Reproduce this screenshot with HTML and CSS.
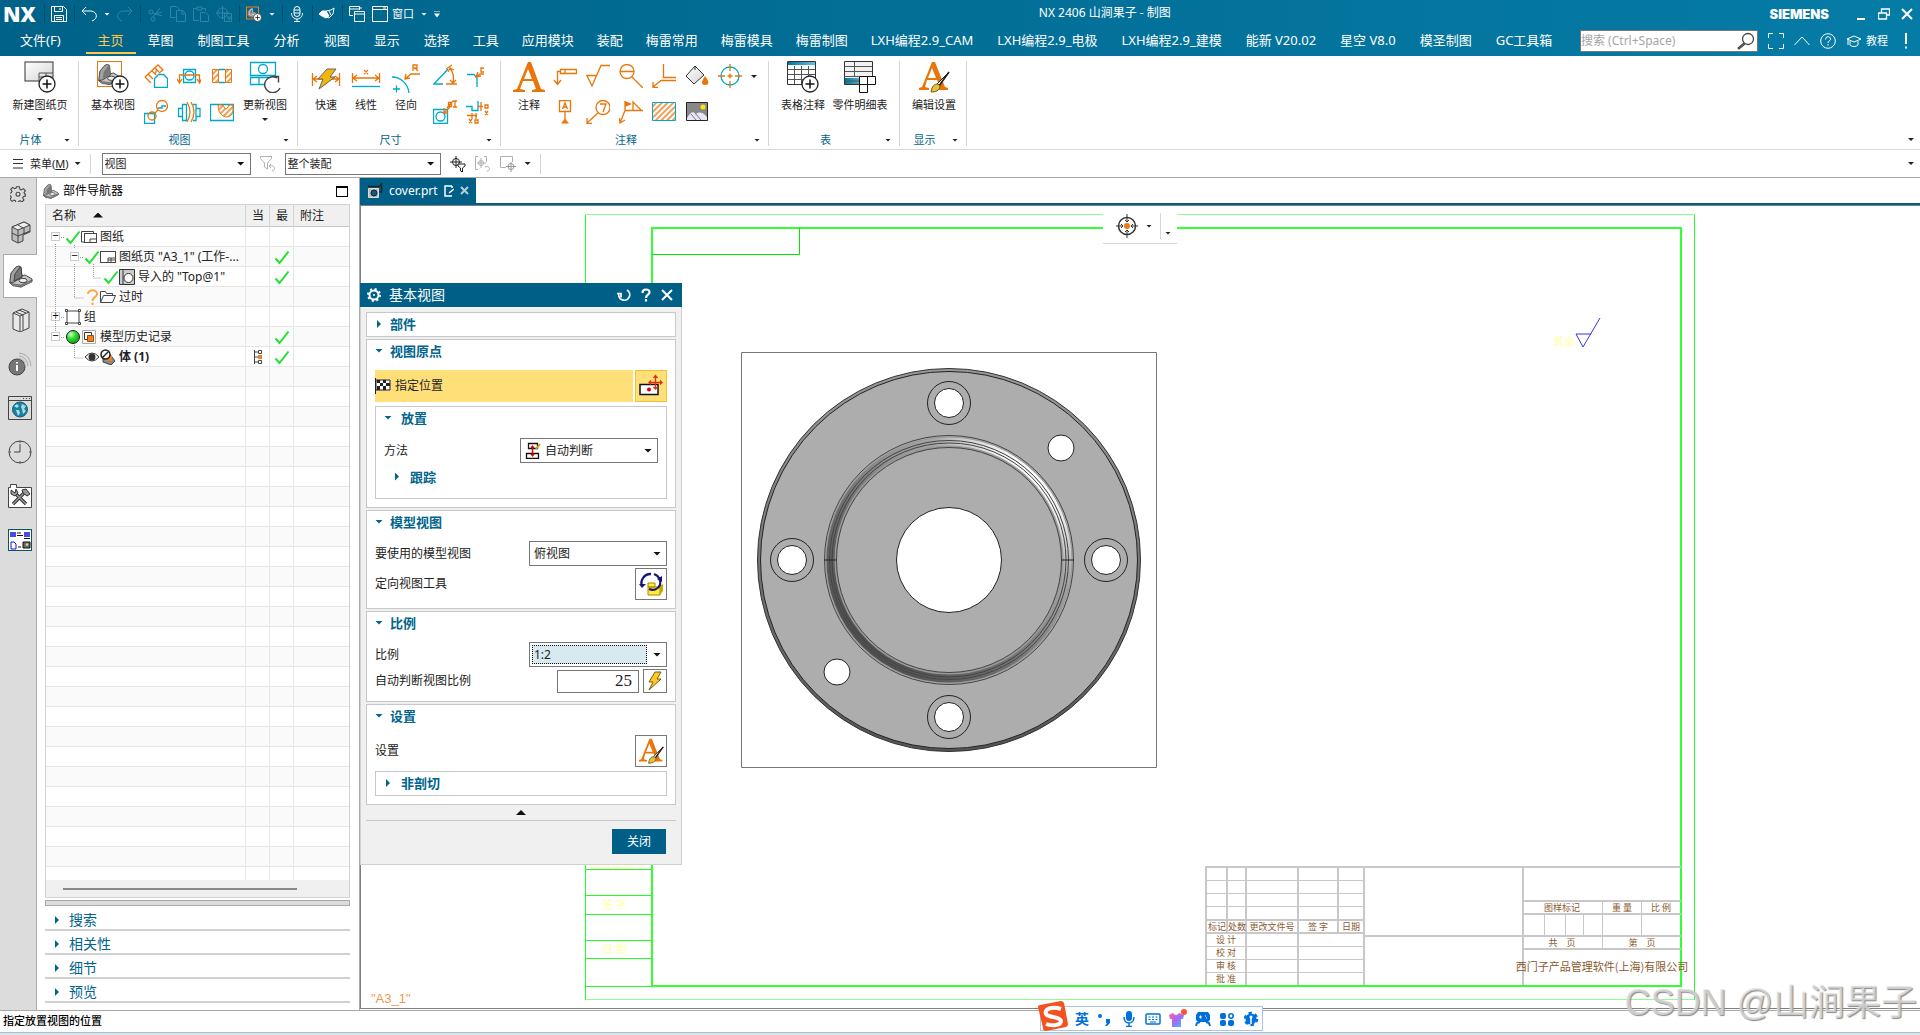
FILE: index.html
```html
<!DOCTYPE html>
<html lang="zh-CN">
<head>
<meta charset="utf-8">
<title>NX 2406 山涧果子 - 制图</title>
<link rel="stylesheet" href="styles.css">
</head>
<body>
<svg class="sprite" aria-hidden="true">
  <defs>
    <linearGradient id="metal" x1="0" y1="0" x2="1" y2="1"><stop offset="0" stop-color="#d8d8d8"/><stop offset="1" stop-color="#6e6e6e"/></linearGradient>
    <linearGradient id="paper" x1="0" y1="0" x2="1" y2="1"><stop offset="0" stop-color="#fff"/><stop offset="1" stop-color="#d4d4d4"/></linearGradient>
    <linearGradient id="sheet-blue" x1="0" y1="0" x2="1" y2="0"><stop offset="0" stop-color="#00769f"/><stop offset="1" stop-color="#6fc0d8"/></linearGradient>
    <radialGradient id="ball" cx=".35" cy=".3" r=".7"><stop offset="0" stop-color="#d8ffd8"/><stop offset=".45" stop-color="#35e035"/><stop offset="1" stop-color="#14a414"/></radialGradient>
    <pattern id="hatch" width="4" height="4" patternUnits="userSpaceOnUse" patternTransform="rotate(45)"><path d="M1 0V4" stroke="#e8760a" stroke-width="1.4"/></pattern>
  </defs>
  <symbol id="check" viewBox="0 0 16 16"><path d="M1.500 9.500L5.500 14L14.500 2.500" fill="none" stroke="#22e02e" stroke-width="2"/></symbol>
  <symbol id="bracket" viewBox="0 0 24 24"><path d="M1 18l11-6 4-1 7 4v2l-11 6-8-2-3-2z" fill="#c4c4c4" stroke="#444"/><path d="M1 18l3 2 8 1 11-5v2l-11 5-8-1-3-3z" fill="#8a8a8a" stroke="#444" stroke-width=".6"/><path d="M1 16l1-7 5-6q3-2 5 0l1 10-8 5-4 1z" fill="#a2a2a2" stroke="#444"/><path d="M5 17l1-7 5-7 1 1 1 9z" fill="#787878"/><ellipse cx="14" cy="16.500" rx="4" ry="2.200" fill="#eee" stroke="#444"/></symbol>
  <symbol id="plusbadge" viewBox="0 0 18 18"><circle cx="9" cy="9" r="8" fill="#fff" stroke="#222" stroke-width="1.300"/><path d="M9 4.500v9M4.500 9h9" stroke="#111" stroke-width="1.500"/></symbol>
  <symbol id="letterbrush" viewBox="0 0 32 32"><path d="M1 29v-2l3-1L14 1h3l10 25 3 1v2H19v-2l3-1-3-7H9l-2 7 4 1v2zM10 17h8L14 7z" fill="#e8760a"/><path d="M31 11L18 24l2 2z" fill="#fff" stroke="#222"/><path d="M31 11L21 25" stroke="#222" stroke-width="1.600"/><path d="M20 23c-4 0-6 2-7 8 4 0 9-1 9-6z" fill="#e5c040" stroke="#6f5a10"/></symbol>
  <symbol id="bolt" viewBox="0 0 16 20"><path d="M8 1h6l-4 7h4L2 19l4-8H2z" fill="#ffc926" stroke="#7b5a08"/></symbol>
  <symbol id="sheet" viewBox="0 0 16 16"><rect x=".5" y="2.500" width="15" height="11" fill="#fff" stroke="#444"/><path d="M8 13v-4h7M8 11h7M11 9v4" fill="none" stroke="#444"/></symbol>
</svg>

<header class="app-header">
  <div class="title-row">
    <div class="quick-tools">
      <strong class="nx-logo">NX</strong>
      <i class="tool-sep"></i>
      <button class="tool" aria-label="保存"><svg viewBox="0 0 16 16"><path d="M.5.5h12l3 3v12H.5zM3.500.500v5h8v-5M9 2v2M3.500 15.500v-6h9v6M5 11.500h6M5 13.500h6"/></svg></button>
      <i class="tool-sep"></i>
      <button class="tool" aria-label="撤销"><svg viewBox="0 0 16 16"><path d="M5 1L1 5l4 4M1 5h9c7 1 7 8 1 10"/></svg></button>
      <i class="caret light"></i>
      <button class="tool dim" aria-label="重做"><svg viewBox="0 0 16 16"><path d="M11 1l4 4-4 4M15 5H6c-7 1-7 8-1 10"/></svg></button>
      <i class="tool-sep"></i>
      <button class="tool dim" aria-label="剪切"><svg viewBox="0 0 16 16"><circle cx="4" cy="6" r="2"/><circle cx="6" cy="13" r="2"/><path d="M6 7l9 3M6 11L13 2M8 8l7-2"/></svg></button>
      <button class="tool dim" aria-label="复制"><svg viewBox="0 0 16 16"><path d="M5.500 11.500h-5V.500h6l3 3v1M6.500 4.500h6l3 3v8h-9zM12 5v3h3"/></svg></button>
      <button class="tool dim" aria-label="粘贴"><svg viewBox="0 0 16 16"><path d="M6 14.500H.5v-12H4M9 2.500h3.500V5M4 1h5v3H4zM7.500 6.500h5l3 3v6h-8z"/></svg></button>
      <button class="tool dim" aria-label="命令查找"><svg viewBox="0 0 16 16"><circle cx="6.500" cy="7" r="5"/><path d="M0 7h13M6.500 0v13M8.500 7.500h7v8h-7zM10 9l4 4M14 10v3h-3"/></svg></button>
      <i class="tool-sep"></i>
      <button class="tool" aria-label="基本视图"><svg viewBox="0 0 16 16"><rect x=".5" y="1" width="12" height="12" style="stroke:#f08020"/><use href="#bracket" x="1" y="1" width="11" height="11"/><use href="#plusbadge" x="7" y="7" width="9" height="9"/></svg></button>
      <i class="caret light"></i>
      <i class="tool-sep"></i>
      <button class="tool" aria-label="语音"><svg viewBox="0 0 16 16"><rect x="5" y=".5" width="6" height="10" rx="3"/><path d="M5 4h6M5 7h6M2.500 7c0 8 11 8 11 0M8 13v3M5 15.500h6"/></svg></button>
      <i class="tool-sep"></i>
      <button class="tool" aria-label="触控"><svg viewBox="0 0 16 16"><path d="M0 8l3-3h4l3 5-3 2-4-2z" fill="#fff"/><path d="M7 5l5-1 3-2-1 6-4 4-3-1M10 5l2 4"/></svg></button>
      <i class="tool-sep"></i>
      <button class="tool" aria-label="层叠"><svg viewBox="0 0 16 16"><path d="M4 9.500H.5v-9h10V4M.5 3h10M5.500 5.500h10v10h-10zM5.500 8h10M11 2h2"/></svg></button>
      <button class="tool wide"><svg viewBox="0 0 16 16"><path d="M.5.500h15v15H.5zM.5 3.500h15M11 2h3"/></svg>窗口</button>
      <i class="caret light"></i>
      <i class="caret light barred"></i>
    </div>
    <div class="window-title">NX 2406 山涧果子 - 制图</div>
    <div class="window-controls">
      <strong class="brand">SIEMENS</strong>
      <button aria-label="最小化"><svg width="12" height="12" viewBox="0 0 12 12"><path d="M2 11h8" stroke="#fff" stroke-width="2"/></svg></button>
      <button aria-label="还原"><svg width="12" height="12" viewBox="0 0 12 12"><path d="M3.500 5V1h8v6H9M.5 5h8v6h-8z" fill="none" stroke="#fff" stroke-width="1.300"/></svg></button>
      <button aria-label="关闭窗口"><svg width="12" height="12" viewBox="0 0 12 12"><path d="M1 1l10 10M11 1L1 11" stroke="#fff" stroke-width="2"/></svg></button>
    </div>
  </div>
  <div class="tab-row">
    <nav class="tabs">
      <a href="#" class="file-tab">文件(F)</a><a href="#" class="active">主页</a><a href="#">草图</a><a href="#">制图工具</a><a href="#">分析</a><a href="#">视图</a><a href="#">显示</a><a href="#">选择</a><a href="#">工具</a><a href="#">应用模块</a><a href="#">装配</a><a href="#">梅雷常用</a><a href="#">梅雷模具</a><a href="#">梅雷制图</a><a href="#">LXH编程2.9_CAM</a><a href="#">LXH编程2.9_电极</a><a href="#">LXH编程2.9_建模</a><a href="#">能新 V20.02</a><a href="#">星空 V8.0</a><a href="#">模圣制图</a><a href="#">GC工具箱</a>
    </nav>
    <div class="header-tools">
      <label class="search-box"><input type="text" placeholder="搜索 (Ctrl+Space)" aria-label="搜索"><svg width="18" height="18" viewBox="0 0 18 18"><circle cx="11" cy="7" r="5.500" fill="none" stroke="#444" stroke-width="1.300"/><path d="M7 11l-6 5 1 1 6-5" fill="none" stroke="#444" stroke-width="1.200"/></svg></label>
      <button class="tool" aria-label="全屏"><svg viewBox="0 0 16 16"><path d="M5 .5H.5V5M11 .5h4.500V5M5 15.500H.5V11M11 15.500h4.500V11"/></svg></button>
      <button class="tool" aria-label="最小化功能区"><svg viewBox="0 0 16 16"><path d="M.5 12L8 4l7.500 8"/></svg></button>
      <button class="tool" aria-label="帮助"><svg viewBox="0 0 16 16"><circle cx="8" cy="8" r="7.300"/><path d="M5.500 6.500c0-4 5.500-3.500 5 0-.5 1.500-2.500 1.500-2.500 3.500M8 11v1.500"/></svg></button>
      <button class="tool wide"><svg viewBox="0 0 16 16"><path d="M1 6l7-3 7 3-7 3zM4 8v4c2 2 6 2 8 0V8M2 7v5"/></svg>教程</button>
      <button class="tool" aria-label="提示"><svg viewBox="0 0 16 16"><path d="M8 0v11M8 13.500v2" stroke-width="2"/></svg></button>
    </div>
  </div>
</header>

<section class="ribbon" aria-label="主页">
  <div class="group g-sheet">
    <div class="group-body">
      <button class="big"><svg viewBox="0 0 32 32"><rect x="1" y="1" width="28" height="19" fill="url(#paper)" stroke="#333"/><path d="M15 20v-8h14M15 16h14M22 12v8" fill="none" stroke="#555"/><use href="#plusbadge" x="14" y="14" width="18" height="18"/></svg>新建图纸页<i class="caret"></i></button>
    </div>
    <div class="group-label"><span>片体</span><i class="caret"></i></div>
  </div>
  <div class="group g-view">
    <div class="group-body">
      <button class="big"><svg viewBox="0 0 32 32"><rect x=".5" y=".5" width="24" height="25" fill="none" stroke="#e8760a"/><use href="#bracket" x="1" y="1" width="23" height="24"/><use href="#plusbadge" x="14" y="14" width="18" height="18"/></svg>基本视图</button>
      <div class="small-grid c3">
        <button aria-label="投影视图"><svg viewBox="0 0 24 24"><path class="o" d="M1 13L14 1l5 5-4 3M1 13l6 6M4 10l5 5M8 7l4 4M11 4l4 4M11 10l2-5"/><path class="b" d="M10.500 23.500v-9l4-4h5l4 4v9z"/></svg></button>
        <button aria-label="剖视图"><svg viewBox="0 0 24 24"><path class="b" d="M6.500 5.500h12v13h-12z"/><circle class="b" cx="12.500" cy="11.500" r="4.500"/><path class="o" d="M2.500 18v-7h20v7M0 15l2.500 4L5 15M20 15l2.500 4 2-4"/></svg></button>
        <button aria-label="剖切线"><svg viewBox="0 0 24 24"><path d="M2.500 5.500h6v13h-6zM15.500 5.500h6v13h-6z" fill="url(#hatch)" stroke="#e8760a"/><path class="b" d="M9 5.500h6M9 18.500h6"/></svg></button>
        <button aria-label="局部放大图"><svg viewBox="0 0 24 24"><path class="b" d="M.5 13.500h10v10H.5z"/><circle class="o" cx="18" cy="6" r="5.500"/><circle class="o" cx="8" cy="16" r="4"/><path class="o" d="M11 13l3-3"/><path class="b" d="M14 8h4V6h4"/></svg></button>
        <button aria-label="断开视图"><svg viewBox="0 0 24 24"><path class="b" d="M1.500 8.500h4v8h-4zM5.500 4.500h4v16h-4zM16 4.500h3v16h-3M19 8.500h4v8h-4"/><path class="o" d="M10 2q6 10 0 20M14 2q6 10 0 20"/></svg></button>
        <button aria-label="局部剖"><svg viewBox="0 0 24 24"><path class="b" d="M.5 4.500h23v16H.5z"/><path d="M8 5c0 15 15 15 15 5V5h-4q-3 8-6 0z" fill="#fff"/><path d="M8 5c0 15 15 15 15 5V5h-4q-3 8-6 0z" fill="url(#hatch)" stroke="#e8760a"/></svg></button>
      </div>
      <button class="big"><svg viewBox="0 0 32 32"><path class="b" d="M1.500 1.500h25v13h-25zM1.500 16.500h25v7h-25zM10 17v6"/><circle class="b" cx="14" cy="8" r="4.500"/><circle cx="24" cy="24" r="8" fill="#fff"/><path d="M28 17a8 8 0 1 0 3 10M24 15.500h5.500v6" fill="none" stroke="#444" stroke-width="1.400"/></svg>更新视图<i class="caret"></i></button>
    </div>
    <div class="group-label"><span>视图</span><i class="caret"></i></div>
  </div>
  <div class="group g-dim">
    <div class="group-body">
      <button class="big narrow"><svg viewBox="0 0 32 32"><path class="o" d="M2.500 12v13M29.500 12v13M3 18h26M7 15l-4 3 4 3M25 15l4 3-4 3"/><path d="M17 8h9l-6 8h5L9 28l4-10H8z" fill="#f2b60c" stroke="#666"/></svg>快速</button>
      <button class="big narrow"><svg viewBox="0 0 32 32"><path class="o" d="M2.500 12v10M29.500 12v10M3 17h26M7 14l-4 3 4 3M25 14l4 3-4 3M14 9l4 4M18 9l-4 4"/><path class="b" d="M2 25.500h28" stroke-width="2"/></svg>线性</button>
      <button class="big narrow"><svg viewBox="0 0 32 32"><path class="b" d="M2 16c9 0 16 7 17 16M3 28h7M6.500 24.500v7"/><path class="o" d="M30 13h-9l-6 5M16 13l-1 5 5-1M23 10V4h4v3h-4M25 7l3 3"/></svg>径向</button>
      <div class="small-grid c2">
        <button aria-label="角度"><svg viewBox="0 0 24 24"><path class="b" d="M15 5L1 20h9"/><path class="o" d="M13 5l6-4M13 20h11M17 4q5 7 3 15M15 8l2-4 4 2M17 16l3 3 3-3"/></svg></button>
        <button aria-label="倒斜角"><svg viewBox="0 0 24 24"><path class="b" d="M1 10.500h7l3 3V23"/><path class="o" d="M18 10h-4l-4 3M12 8l-2 5 5-1M18 4h-3v4h3"/></svg></button>
        <button aria-label="孔标注"><svg viewBox="0 0 24 24"><path class="b" d="M.5 9.500h14v14H.5z"/><circle class="b" cx="7.500" cy="16.500" r="4.500"/><path class="o" d="M17 7l-6 6M11 8v5h4M22 1v6M20 1h4M20 7h4M15.500 2.500h3v4h-3zM14 8l6-7"/></svg></button>
        <button aria-label="坐标"><svg viewBox="0 0 24 24"><path class="b" d="M0 6.500h6v4h6V1"/><path class="o" d="M12 6.500h5M15 2v9M19 5h3v3h-3zM19 11l3 4M22 11l-3 4M1 15.500h10M6 13v6M10 13v6M3 19l3 4M6 19l-3 4M9 20h3v3H9z"/></svg></button>
      </div>
    </div>
    <div class="group-label"><span>尺寸</span><i class="caret"></i></div>
  </div>
  <div class="group g-note">
    <div class="group-body">
      <button class="big narrow"><svg viewBox="0 0 32 32"><path d="M0 31v-2l4-1L15 1h3l10 27 4 1v2H19v-2l4-1-3-8H10l-3 8 5 1v2zM11 18h8L15 8z" fill="#e8760a"/></svg>注释</button>
      <div class="small-grid c6">
        <button aria-label="特征控制框"><svg viewBox="0 0 24 24"><path class="o" d="M7.500 5.500h16v4h-16zM12 5v5M7 7.500H4.500V20M1 16l3.500 4.500L8 16"/></svg></button>
        <button aria-label="表面粗糙度"><svg viewBox="0 0 24 24"><path class="o" d="M24 1.500H15L6 22 1 11.500h9"/></svg></button>
        <button aria-label="目标点"><svg viewBox="0 0 24 24"><circle class="o" cx="8" cy="7.500" r="7"/><path class="o" d="M1 7.500h14M13 13l11 11"/></svg></button>
        <button aria-label="相交符号"><svg viewBox="0 0 24 24"><path class="o" d="M11.500 0v13.500H24M24 16.500H9L1 23M1 18v5.500h5"/></svg></button>
        <button aria-label="填充"><svg viewBox="0 0 24 24"><path d="M10 2l9 9-10 9-8-8z" fill="url(#paper)" stroke="#333"/><path d="M10 2v4" stroke="#333"/><path d="M20 12c5 6 4 9 0 9s-4-3 0-9z" fill="#e8760a"/></svg></button>
        <button aria-label="中心标记"><svg viewBox="0 0 24 24"><circle class="b" cx="12" cy="12" r="9"/><path class="o" d="M12 0v7M12 17v7M0 12h7M17 12h7M9.500 12h5M12 9.500v5"/></svg></button>
        <button aria-label="基准特征"><svg viewBox="0 0 24 24"><path class="o" d="M6.500.500h11v11h-11zM12 12v9M9.500 9L12 3l2.500 6M10.500 7h3"/><path d="M8 23.500l4-5 4 5z" fill="#e8760a"/></svg></button>
        <button aria-label="符号标注"><svg viewBox="0 0 24 24"><circle class="o" cx="17" cy="7.500" r="7"/><path class="o" d="M14 4h6l-3 8M12 13L1 23M1 18v5.500h5"/></svg></button>
        <button aria-label="焊接符号"><svg viewBox="0 0 24 24"><path class="o" d="M24 10.500H6L1 23M.5 18l.5 5 5-3M6 10V1M14 10V2l8 8"/><path d="M6 1l7 3-7 3z" fill="#e8760a"/></svg></button>
        <button aria-label="剖面线"><svg viewBox="0 0 24 24"><path d="M.5 2.500h23v18H.5z" fill="url(#hatch)" stroke="#00a8cc"/></svg></button>
        <button aria-label="图像"><svg viewBox="0 0 24 24"><path d="M1.500 2.500h21v18h-21z" fill="#888" stroke="#222"/><path d="M2 18q5-9 9-4 5-4 11 3v3H2z" fill="#e8e8f4"/><path d="M6 14l5 6M10 13l6 7" stroke="#778"/><circle cx="18" cy="7" r="2.500" fill="#ffe600"/></svg></button>
      </div>
      <i class="caret more"></i>
    </div>
    <div class="group-label"><span>注释</span><i class="caret"></i></div>
  </div>
  <div class="group g-table">
    <div class="group-body">
      <button class="big"><svg viewBox="0 0 32 32"><path d="M.5.500h28v23H.5z" fill="#fff" stroke="#333"/><path d="M1 1h27v3H1z" fill="url(#sheet-blue)"/><path d="M1 8.500h27M1 13.500h27M1 18.500h27M7.500 5v18M14.500 5v18M21.500 5v18" stroke="#555"/><use href="#plusbadge" x="14" y="14" width="18" height="18"/></svg>表格注释</button>
      <button class="big mid"><svg viewBox="0 0 32 32"><path d="M.5.500h28v23H.5z" fill="#f2f2f2" stroke="#333"/><path d="M1 17h20v6H1z" fill="url(#sheet-blue)"/><path d="M1 5.500h27M1 10.500h27M1 15.500h27M1 20h20M10.500 1v14" stroke="#555"/><path d="M15.500 15.500h16v8h-8v8h-8zM23.500 15v16M15 23.500h16M23.500 23.500v8" fill="#fff" stroke="#111"/></svg>零件明细表</button>
    </div>
    <div class="group-label"><span>表</span><i class="caret"></i></div>
  </div>
  <div class="group g-show">
    <div class="group-body">
      <button class="big"><svg viewBox="0 0 32 32"><use href="#letterbrush"/></svg>编辑设置</button>
    </div>
    <div class="group-label"><span>显示</span><i class="caret"></i></div>
  </div>
  <i class="caret ribbon-end"></i>
</section>

<div class="border-bar">
  <button class="menu-button"><svg width="12" height="12" viewBox="0 0 12 12"><path d="M1 1.500h10M1 5.500h10M1 10h10" stroke="#333"/></svg>菜单(<u>M</u>)<i class="caret"></i></button>
  <i class="bar-sep"></i>
  <span class="select-wrap type-filter"><select aria-label="类型过滤器"><option>视图</option></select></span>
  <svg class="bar-icon" viewBox="0 0 16 16"><path d="M.5.500h11v2L7.500 7v6l-3-2V7L.5 2.500zM10 10c5-2 6 5 2 5M11 8l-2 2 2 2" stroke="#b0b0b0"/></svg>
  <span class="select-wrap scope-filter"><select aria-label="选择范围"><option>整个装配</option></select></span>
  <svg class="bar-icon" viewBox="0 0 16 16"><circle cx="6" cy="6" r="3.500" stroke="#222"/><path d="M6 0v12M0 6h12" stroke="#222"/><path d="M8 8h7v2l-2.500 2v4l-2-1v-3L8 10z" fill="#fff" stroke="#222"/></svg>
  <svg class="bar-icon" viewBox="0 0 16 16"><path d="M3 .5H.5v13H3M9 .5h2.500V6M6 2v10M2 7h9M10 11c5-2 6 4 2 4" stroke="#b0b0b0"/><circle cx="6" cy="7" r="2.500" stroke="#b0b0b0"/></svg>
  <svg class="bar-icon" viewBox="0 0 16 16"><path d="M6 11.500H.5V.5h12V6" stroke="#b0b0b0"/><circle cx="11" cy="10.500" r="3" stroke="#999"/><path d="M11 6v10M6 10.500h10" stroke="#999"/></svg>
  <i class="caret"></i>
  <i class="bar-sep"></i>
  <i class="caret bar-end"></i>
</div>

<main class="workspace">
  <nav class="rail" aria-label="资源条">
    <button class="gear" aria-label="设置"><svg viewBox="0 0 24 24"><path d="M10 1h4l1 4 2 1 3-2 3 3-2 3 1 2 1 0v3l-3 1-1 2 2 3-3 3-3-2-2 1-1 2h-3l-1-3-2-1-3 2-3-3 2-3-1-2-2-1v-3l3-1 1-2-2-3 3-3 3 2 2-1z" stroke-width="1.600"/><circle cx="12" cy="12.500" r="3" stroke-width="1.600"/></svg></button>
    <button aria-label="装配导航器"><svg viewBox="0 0 24 24"><path d="M4 7l12-5 6 3v7l-7 3v6l-5 2-6-3z" fill="#bdbdbd"/><path d="M4 7l12-5 6 3-12 5z" fill="#eee"/><path d="M10 10v13M4 13l6 3 12-5M16 8v6M10 5l5 3"/></svg></button>
    <button class="current" aria-label="部件导航器"><svg viewBox="0 0 24 24"><use href="#bracket"/></svg></button>
    <button aria-label="重用库"><svg viewBox="0 0 24 24"><path d="M5 5l9-4 7 3v16l-9 4-7-3z" fill="#e8e8e8"/><path d="M5 5l7 3v16M12 8l9-4M8 4l7 3v15M11 2l7 3"/></svg></button>
    <button aria-label="HD3D"><svg viewBox="0 0 24 24"><circle cx="9" cy="15" r="8" fill="#777"/><path d="M9 13v6M9 10v1.500" stroke="#fff" stroke-width="2"/><path d="M11 4q8 1 9 10M11 1q11 1 12 13M11 6.500q6 1 6 7" stroke="#aaa"/></svg></button>
    <button aria-label="浏览器"><svg viewBox="0 0 24 24"><path d="M.5.500h23v23H.5zM.5 4.500h23M15 2.500h1M18 2.500h1M21 2.500h1"/><circle cx="12" cy="13.500" r="7.500" fill="#1b7f9e" stroke="#135f78"/><path d="M6 10l3-2 2 2-2 2zM8 14l3 0 1 3-2 3zM14 8l4 2-2 3 2 2-3 3-1-5-1-2z" fill="#a6dbe8" stroke="none"/></svg></button>
    <button aria-label="历史"><svg viewBox="0 0 24 24"><circle cx="12" cy="12" r="11"/><path d="M12 4v8H6M12 1v2M12 21v2M1 12h2M21 12h2"/></svg></button>
    <button aria-label="加工工具"><svg viewBox="0 0 24 24"><path d="M.5 3.500h2v-3h6v3h15v20H.5z" fill="#fff"/><path d="M5 20L17 8M7 9l11 11" stroke="#333" stroke-width="3.400"/><path d="M5 20L17 8M7 9l11 11" stroke="#999" stroke-width="1.400"/><path d="M3 6l4 3 1-4 2 4-3 3-4-2zM14 6l4-1 4 5-3 2-4-3z" fill="#999" stroke="#333"/></svg></button>
    <button aria-label="角色"><svg viewBox="0 0 24 24"><rect x=".5" y="1.500" width="23" height="21" fill="#fff" stroke="#0a5560"/><path d="M2 4h6v5H2zM16 4h6v5h-6z" fill="#4a4ae4" stroke="none"/><path d="M9 5h4M9 7.500h6M10 19h3M16 10.500h6" stroke="#111"/><path d="M3 14h3l2 2v5H3z" stroke="#1414d8"/><path d="M15 14h7v6h-7z" fill="#668" stroke="#111"/><circle cx="19" cy="16.500" r="1.200" fill="#ffe600" stroke="none"/></svg></button>
  </nav>

  <aside class="navigator">
    <div class="panel-title"><svg width="16" height="16" viewBox="0 0 24 24"><use href="#bracket"/></svg><span>部件导航器</span><button aria-label="最大化面板" class="max-button"></button></div>
    <div class="tree">
      <table>
        <colgroup><col><col class="flag"><col class="flag"><col class="remark"></colgroup>
        <thead><tr><th>名称<i class="sort-up"></i></th><th>当</th><th>最</th><th>附注</th></tr></thead>
        <tbody>
          <tr><td><div class="node d1"><b class="twist">−</b><svg class="ic chk"><use href="#check"/></svg><svg class="ic" viewBox="0 0 16 16"><path d="M3 13H.5V2.500h12V4" fill="none" stroke="#444"/><rect x="3.500" y="4.500" width="12" height="9" fill="#fff" stroke="#444"/><path d="M9 13v-3h6" stroke="#444" fill="none"/></svg>图纸</div></td><td></td><td></td><td></td></tr>
          <tr><td><div class="node d2"><b class="twist">−</b><svg class="ic chk"><use href="#check"/></svg><svg class="ic"><use href="#sheet"/></svg>图纸页 "A3_1" (工作-...</div></td><td></td><td><svg class="ic"><use href="#check"/></svg></td><td></td></tr>
          <tr><td><div class="node d3"><svg class="ic chk"><use href="#check"/></svg><svg class="ic" viewBox="0 0 16 16"><path d="M.5.500h15v15H.5zM4 .5v15" fill="#ccc" stroke="#333"/><circle cx="9.500" cy="9" r="4.500" fill="#fff" stroke="#333"/></svg>导入的 "Top@1"</div></td><td></td><td><svg class="ic"><use href="#check"/></svg></td><td></td></tr>
          <tr><td><div class="node d2b"><svg class="ic chk" viewBox="0 0 16 16"><path d="M4 5c0-5 9-5 9 0 0 3-4.500 3-4.500 7M8.500 13.500V16" fill="none" stroke="#ffa640" stroke-width="2"/></svg><svg class="ic" viewBox="0 0 16 16"><path d="M.5 13.500v-11h5l1 2h6v2M.5 13.500l3-7h12l-3 7z" fill="none" stroke="#444"/></svg>过时</div></td><td></td><td></td><td></td></tr>
          <tr><td><div class="node d1"><b class="twist">+</b><svg class="ic" viewBox="0 0 16 16"><path d="M2 2h12v12H2zM.5.500h2v2h-2zM13.500.500h2v2h-2zM.5 13.500h2v2h-2zM13.500 13.500h2v2h-2z" fill="#fff" stroke="#444"/></svg>组</div></td><td></td><td></td><td></td></tr>
          <tr><td><div class="node d1"><b class="twist">−</b><svg class="ic" viewBox="0 0 16 16"><circle cx="8" cy="8" r="6.500" fill="url(#ball)" stroke="#222"/></svg><svg class="ic" viewBox="0 0 16 16"><path d="M1.500 1.500h13v13h-13z" fill="none" stroke="#aaa"/><path d="M3.500 3.500h7v7h-7z" fill="#fff" stroke="#333"/><path d="M6.500 6.500h6v6h-6z" fill="#f08020" stroke="#a04a00"/></svg>模型历史记录</div></td><td></td><td><svg class="ic"><use href="#check"/></svg></td><td></td></tr>
          <tr><td><div class="node d2b strong"><svg class="ic" viewBox="0 0 16 16"><path d="M1 8q7-8 14 0-7 8-14 0z" fill="#fff" stroke="#333"/><circle cx="8" cy="8" r="3.500" fill="#333"/></svg><svg class="ic" viewBox="0 0 16 16"><path d="M3 8l6-4 6 8-4 4-8-3z" fill="#888" stroke="#444"/><path d="M6 7h6v5H6z" fill="#f08020"/><circle cx="5.500" cy="5.500" r="4.500" fill="#fff" stroke="#222" stroke-width="1.500"/><path d="M2.500 8.500l6-6" stroke="#222" stroke-width="1.500"/></svg>体 (1)</div></td><td><svg class="ic" viewBox="0 0 16 16"><path d="M4.500 1v14M5 3h3M5 8h3M5 13h3M8.500 1.500h3v3h-3zM8.500 11.500h3v3h-3z" fill="none" stroke="#444"/><path d="M8 6h4v4H8z" fill="#f08020"/></svg></td><td><svg class="ic"><use href="#check"/></svg></td><td></td></tr>
        </tbody>
      </table>
      <svg class="tree-lines" width="60" height="140"><path d="M11.500 17V104M17 10.500h4M17 90.500h4M17 110.500h4M30.500 18v3M30.500 37v34h9M36 30.500h4M49.500 37v14h8M30.500 118v13h9" fill="none" stroke="#999" stroke-dasharray="1 1"/></svg>
      <div class="empty-rows"><i></i><i></i><i></i><i></i></div>
      <div class="h-scroll"><i></i></div>
    </div>
    <div class="splitter"></div>
    <button class="fold">搜索</button>
    <button class="fold">相关性</button>
    <button class="fold">细节</button>
    <button class="fold">预览</button>
  </aside>

  <section class="stage">
    <div class="doc-tabs">
      <div class="doc-tab"><svg width="16" height="16" viewBox="0 0 16 16"><path d="M1.500 5.500h10v9h-10z" fill="#bbb" stroke="#ddd"/><path d="M1 3.500h11l2.500-2.500v8h-2" fill="none" stroke="#222" stroke-width="1.500"/><circle cx="7" cy="10" r="3" fill="#005f87" stroke="#222"/></svg><span>cover.prt</span><svg width="10" height="12" viewBox="0 0 10 12"><path d="M8 1H1v10h7M8 1v2M5 8l5-4" fill="none" stroke="#fff" stroke-width="1.500"/></svg><button aria-label="关闭文档"><svg width="9" height="9" viewBox="0 0 9 9"><path d="M1 1l7 7M8 1L1 8" stroke="#b7cdd8" stroke-width="2"/></svg></button></div>
    </div>
    <div class="canvas">
      <svg class="drawing" width="1559" height="802" viewBox="361 206 1559 802">
        <defs>
          <linearGradient id="ring" x1="0" y1="1" x2="1" y2="0"><stop offset="0" stop-color="#3c3c3c"/><stop offset=".45" stop-color="#777"/><stop offset=".72" stop-color="#a8a8a8"/><stop offset=".85" stop-color="#fafafa"/><stop offset="1" stop-color="#d0d0d0"/></linearGradient>
          <linearGradient id="rim" x1="0" y1="1" x2="0" y2="0"><stop offset="0" stop-color="#555"/><stop offset="1" stop-color="#999"/></linearGradient>
        </defs>
        <g fill="none" stroke="#22ff22">
          <path d="M585.500 1000V214.500M1694.500 214.500V1000"/><path d="M585.500 214.500h1109M585.500 999.500h1109" stroke="#8cff8c"/>
          <path d="M652 228H1681V986H652z" stroke="#33ff33" stroke-width="2"/>
          <path d="M652 254.500h147.500V228" stroke="#00e800"/>
          <path d="M585.500 869.500H652M585.500 895.500H652M585.500 914.500H652M585.500 940.500H652M585.500 958.500H652M585.500 986.500H652"/>
        </g>
        <g class="faint">
          <text x="590" y="868">旧底图总号</text><text x="602" y="909">签 字</text><text x="602" y="953">日 期</text><text x="1553" y="346">其余</text>
        </g>
        <path d="M1576 334h15M1576 334l7 13 17-29" fill="none" stroke="#3434e0"/>
        <path d="M741.500 352.500h415v415h-415z" fill="none" stroke="#777"/>
        <g fill="#adadad" stroke="#222">
          <circle cx="949" cy="560" r="190" stroke="url(#rim)" stroke-width="3"/>
          <circle cx="949" cy="560" r="191.500" fill="none" stroke="#333"/><circle cx="949" cy="560" r="188.500" fill="none"/>
          <circle cx="949" cy="560" r="118" fill="none" stroke="#999" stroke-width="11"/>
          <circle cx="949" cy="560" r="121" fill="none" stroke="url(#ring)" stroke-width="3"/>
          <circle cx="949" cy="560" r="117" fill="none" stroke="url(#ring)" stroke-width="5"/>
          <circle cx="949" cy="560" r="124.500" fill="none" stroke="#444"/><circle cx="949" cy="560" r="119.500" fill="none" stroke="#444"/><circle cx="949" cy="560" r="117" fill="none" stroke="#444"/><circle cx="949" cy="560" r="112.500" stroke="#444"/>
          <path d="M824.500 560h12M1061.500 560h12"/>
          <circle cx="949" cy="403" r="21.500"/><circle cx="949" cy="717" r="21.500"/><circle cx="792" cy="560" r="21.500"/><circle cx="1106" cy="560" r="21.500"/>
          <g fill="#fff"><circle cx="949" cy="560" r="52.500"/><circle cx="949" cy="403" r="14.500"/><circle cx="949" cy="717" r="14.500"/><circle cx="792" cy="560" r="14.500"/><circle cx="1106" cy="560" r="14.500"/><circle cx="1061" cy="448" r="13"/><circle cx="837" cy="672" r="13"/></g>
        </g>
        <g fill="none" stroke="#c8c8c8">
          <path d="M1206 985V867h475M1227 867v66M1246 867v118M1298 867v118M1338 867v66M1364 867v118M1523 867v118M1206 920h158M1206 933h158M1364 936h317M1523 901h158M1523 914h158M1523 949h158" stroke-width="2"/>
          <path d="M1206 880.500h158M1206 893.500h158M1206 906.500h158M1206 946.500h158M1206 959.500h158M1206 972.500h158M1544.500 914v22M1565.500 914v22M1583.500 914v22M1602.500 901v48M1641.500 901v35"/>
        </g>
        <g class="block-text">
          <text x="1217" y="930">标记</text><text x="1237" y="930">处数</text><text x="1272" y="930">更改文件号</text><text x="1318" y="930">签 字</text><text x="1351" y="930">日期</text>
          <text x="1226" y="943">设 计</text><text x="1226" y="956">校 对</text><text x="1226" y="969">审 核</text><text x="1226" y="982">批 准</text>
          <text x="1562" y="911">图样标记</text><text x="1622" y="911">重 量</text><text x="1661" y="911">比 例</text>
          <text x="1562" y="946">共　页</text><text x="1642" y="946">第　页</text>
          <text x="1602" y="971" class="company">西门子产品管理软件(上海)有限公司</text>
        </g>
        <text x="371" y="1003" class="sheet-name">"A3_1"</text>
      </svg>
      <div class="float-bar"><svg width="22" height="24" viewBox="0 0 22 24"><circle cx="11" cy="12" r="8.500" fill="none" stroke="#333" stroke-width="1.500"/><path d="M11 0v8M11 16v8M0 12h7M15 12h7M9 6l2 2 2-2M9 18l2-2 2 2M5 10l2 2-2 2M17 10l-2 2 2 2" fill="none" stroke="#333"/><circle cx="11" cy="12" r="3" fill="#f07810"/></svg><i class="caret"></i><i class="float-sep"></i><i class="caret low"></i></div>
    </div>

    <form class="dialog" aria-label="基本视图">
      <div class="dialog-title"><svg width="14" height="14" viewBox="0 0 14 14"><circle cx="7" cy="7" r="4.500" fill="none" stroke="#fff" stroke-width="2"/><circle cx="7" cy="7" r="6" fill="none" stroke="#fff" stroke-width="2" stroke-dasharray="2 2.710"/><circle cx="7" cy="7" r="1" fill="#fff"/></svg><span>基本视图</span>
        <button type="button" aria-label="重置"><svg width="14" height="14" viewBox="0 0 14 14"><path d="M10 2a5.500 5.500 0 1 1-8 3M0 5.500h4v4" fill="none" stroke="#fff" stroke-width="1.700"/></svg></button>
        <button type="button" aria-label="帮助"><svg width="10" height="14" viewBox="0 0 10 14"><path d="M1.500 5c0-5 7-4 7-1 0 3-3.500 2.500-3.500 6M5 11v2.500" fill="none" stroke="#fff" stroke-width="2.200"/></svg></button>
        <button type="button" aria-label="关闭对话框"><svg width="12" height="12" viewBox="0 0 12 12"><path d="M1 1l10 10M11 1L1 11" stroke="#fff" stroke-width="2"/></svg></button>
      </div>
      <div class="dialog-body">
        <fieldset class="box closed"><h3 class="shut">部件</h3></fieldset>
        <fieldset class="box">
          <h3>视图原点</h3>
          <div class="pick"><span class="pick-label"><svg width="16" height="16" viewBox="0 0 16 16"><path d="M.5 0v16" stroke="#222"/><path d="M1 2h14v10H1z" fill="#fff" stroke="#222"/><path d="M2 2h3v3H2zM8 2h3v3H8zM5 5h3v3H5zM11 5h4v3h-4zM2 8h3v4H2zM8 8h3v4H8z" fill="#222"/></svg>指定位置</span><button type="button" class="square hot" aria-label="点对话框"><svg width="24" height="24" viewBox="0 0 24 24"><path d="M1 10.500h18v10H1z" fill="#fff" stroke="#111" stroke-width="1.500"/><circle cx="10" cy="15.500" r="2" fill="#d00"/><path d="M16.500 2v13M10 8.500h13M14.500 4l2-2.500 2 2.500M14.500 13l2 2 2-2M12 6.500l-2 2 2 2M21 6.500l2 2-2 2" fill="none" stroke="#e03010" stroke-width="1.300"/></svg></button></div>
          <div class="box inner">
            <h3>放置</h3>
            <div class="field"><label for="method">方法</label><span class="select-wrap with-icon"><svg width="16" height="17" viewBox="0 0 16 17"><path d="M3.500 1.500h9v5h-9zM1.500 11.500h12v5h-12z" fill="#fff" stroke="#111" stroke-width="1.300"/><path d="M7.500 4v10" stroke="#d00" stroke-width="1.500"/><path d="M5.500 6l2-3 2 3M5.500 12l2 3 2-3" fill="#d00"/><path d="M15 2l-4 5" stroke="#caa800" stroke-width="2"/></svg><select id="method"><option>自动判断</option></select></span></div>
            <h3 class="shut indent">跟踪</h3>
          </div>
        </fieldset>
        <fieldset class="box">
          <h3>模型视图</h3>
          <div class="field"><label for="mview">要使用的模型视图</label><span class="select-wrap"><select id="mview"><option>俯视图</option></select></span></div>
          <div class="field tall"><label for="orient">定向视图工具</label><button type="button" class="square" id="orient"><svg width="24" height="24" viewBox="0 0 24 24"><path d="M9 15h12v8H9zM9 11h7v4H9z" fill="#ffe93a" stroke="#a88a00"/><path d="M21 14l3-2v7l-3 4z" fill="#c8a800"/><path d="M3 14A9 9 0 0 1 12 2M15 2a9 9 0 0 1 6 11c-2 4-6 6-11 4" fill="none" stroke="#16167a" stroke-width="2.300"/><path d="M0 12l3 4 4-4zM18 7l5-3v6z" fill="#16167a"/></svg></button></div>
        </fieldset>
        <fieldset class="box">
          <h3>比例</h3>
          <div class="field"><label for="scale">比例</label><span class="select-wrap combo"><input id="scale" type="text" value="1:2"></span></div>
          <div class="field short"><label for="auto">自动判断视图比例</label><input id="auto" class="number" type="text" value="25"><button type="button" class="square little" aria-label="自动判断"><svg width="16" height="20" viewBox="0 0 16 20"><use href="#bolt"/></svg></button></div>
        </fieldset>
        <fieldset class="box">
          <h3>设置</h3>
          <div class="field tall set"><label for="set">设置</label><button type="button" class="square" id="set"><svg width="26" height="26" viewBox="0 0 32 32"><use href="#letterbrush"/></svg></button></div>
          <div class="box inner closed"><h3 class="shut">非剖切</h3></div>
        </fieldset>
        <i class="collapse"></i>
        <div class="dialog-actions"><button type="button" class="primary">关闭</button></div>
      </div>
    </form>
  </section>
</main>

<footer class="status">指定放置视图的位置</footer>
<div class="desktop-edge"></div>

<div class="ime" role="toolbar" aria-label="输入法">
  <svg class="ime-logo" width="32" height="32" viewBox="0 0 32 32"><path d="M1 6q0-2 2-2L24 0q2 0 3 2l4 21q0 2-2 3L9 30q-3 0-3-3z" fill="#f4511e"/><path d="M24 8C15 5 7 8 9 13c2 4 14 2 15 7 0 5-10 5-15 3" fill="none" stroke="#fff" stroke-width="4"/></svg>
  <b>英</b>
  <svg width="16" height="16" viewBox="0 0 16 16"><circle cx="3" cy="5" r="2"/><path d="M9 8h4v4l-3 3H8l2-3H9z"/></svg>
  <svg width="16" height="16" viewBox="0 0 16 16"><rect x="5" y="0" width="6" height="10" rx="3"/><path d="M3 6c0 8 10 8 10 0M8 12v4M5 15.500h6" fill="none" stroke="#0070dc" stroke-width="1.500"/></svg>
  <svg width="16" height="16" viewBox="0 0 16 16"><rect x="1" y="3" width="14" height="10" rx="1" fill="none" stroke="#0070dc" stroke-width="1.500"/><path d="M3.500 6h2M7 6h2M10.500 6h2M3.500 8.500h2M7 8.500h2M10.500 8.500h2M5 11h6" stroke="#0070dc"/></svg>
  <svg width="18" height="20" viewBox="0 0 18 20"><defs><linearGradient id="shirt" x1="0" y1="0" x2="1" y2="1"><stop offset="0" stop-color="#ff5f9e"/><stop offset=".5" stop-color="#a06cf8"/><stop offset="1" stop-color="#3ac8f8"/></linearGradient></defs><path d="M0 6l4-2q3 4 6 0l5 2-1 4h-2v8H3v-8H1z" fill="url(#shirt)"/><circle cx="15" cy="3" r="3" fill="#ff5030"/></svg>
  <svg width="16" height="16" viewBox="0 0 16 16"><path d="M3 1h10l2 3v5l-2 2H3L1 9V4z"/><path d="M4 6h3M5.500 4.500v3M10 5h1M12 7h-1" stroke="#fff"/><path d="M1 15l1-3 3-1M15 15l-1-3-3-1" fill="none" stroke="#0070dc" stroke-width="2"/></svg>
  <svg width="16" height="16" viewBox="0 0 16 16"><rect x="1" y="2" width="6" height="6" rx="2"/><circle cx="12" cy="5" r="2.200" fill="none" stroke="#0070dc" stroke-width="1.600"/><rect x="1" y="9" width="6" height="6" rx="2"/><rect x="9" y="9" width="6" height="6" rx="2"/></svg>
  <svg width="16" height="16" viewBox="0 0 16 16"><circle cx="8" cy="8" r="5.500"/><circle cx="8" cy="8" r="6" fill="none" stroke="#0070dc" stroke-width="2.500" stroke-dasharray="3.280 3"/><path d="M8 6v7" stroke="#fff" stroke-width="1.500"/><circle cx="8" cy="6" r="1.500" fill="#fff"/></svg>
</div>
<div class="watermark">CSDN @山涧果子</div>
</body>
</html>
```
FILE: styles.css
```css
* { box-sizing: border-box; }
body {
  margin: 0;
  min-height: 100vh;
  display: flex;
  flex-direction: column;
  position: relative;
  overflow-x: hidden;
  font-family: "Noto Sans", "Noto Sans CJK SC", sans-serif;
  font-size: 12px;
  line-height: 16px;
  color: #222;
  background: #fff;
}
button, input, select { font: inherit; color: inherit; }
button { margin: 0; padding: 0; border: 0; background: none; }
a { color: inherit; text-decoration: none; }
i, b { font-style: normal; }
.sprite { position: absolute; width: 0; height: 0; }

.caret {
  flex: none;
  width: 6px;
  height: 3px;
  background: #222;
  clip-path: polygon(0 0, 100% 0, 50% 100%);
}
.caret.light { background: #fff; }
.caret.barred {
  height: 7px;
  clip-path: polygon(0 0, 100% 0, 100% 1px, 0 1px, 0 3px, 100% 3px, 50% 100%, 0 3px);
}

/* header */
.app-header {
  height: 56px;
  color: #fff;
  background: linear-gradient(90deg, #006288, #057ca6);
}
.title-row, .tab-row { display: flex; height: 28px; align-items: center; }
.quick-tools { display: flex; align-items: center; gap: 7px; width: 440px; padding-left: 3px; }
.nx-logo { width: 34px; font: 800 21px/28px "Open Sans", sans-serif; }
.tool-sep { width: 1px; height: 18px; margin-right: -1px; background: #004d6b; }
.tool { display: flex; align-items: center; gap: 4px; flex: none; width: 16px; height: 18px; font-size: 11px; }
.tool.wide { width: auto; white-space: nowrap; }
.tool svg { width: 16px; height: 16px; fill: none; stroke: #fff; }
.tool.dim svg { stroke: #2f87a8; }
.window-title { flex: 1; padding-bottom: 3px; text-align: center; }
.window-controls { display: flex; align-items: center; gap: 11px; padding-right: 7px; }
.window-controls button { display: flex; }
.brand { margin-right: 15px; font: 900 13px/16px "Inter", sans-serif; }
.tab-row { justify-content: space-between; align-items: stretch; }
.tabs { display: flex; font-size: 13px; line-height: 25px; white-space: nowrap; }
.tabs a { padding: 0 12px; height: 26px; }
.tabs a:nth-child(n+8):nth-child(-n+14) { padding-right: 11px; }
.tabs .file-tab { margin: 0 13px 0 8px; }
.tabs .active { color: #ffc84a; border-bottom: 2px solid #ffc84a; }
.header-tools { display: flex; align-items: center; gap: 10px; padding: 0 6px 2px 0; }
.search-box { display: flex; align-items: center; width: 178px; height: 22px; padding-right: 2px; border: 1px solid #777; background: #fff; }
.search-box input { flex: 1; min-width: 0; padding: 0; border: 0; outline: 0; font-size: 12px; color: #222; }
.search-box input::placeholder { color: #a6a6a6; }

/* ribbon */
.ribbon { display: flex; height: 94px; padding: 5px 0 3px; position: relative; border-bottom: 1px solid #d6d6d6; }
.group { display: flex; flex-direction: column; justify-content: space-between; border-right: 1px solid #d6d6d6; }
.group-body { display: flex; padding-left: 10px; }
.g-sheet { width: 79px; }
.g-view { width: 219px; }
.g-dim { width: 203px; }
.g-note { width: 268px; }
.g-table { width: 131px; }
.g-show { width: 67px; }
.g-dim .group-body, .g-note .group-body { padding-left: 8px; }
.big { display: flex; flex-direction: column; align-items: center; gap: 4px; width: 60px; font-size: 11px; line-height: 16px; white-space: nowrap; }
.big svg { width: 32px; height: 32px; }
.g-view .big, .g-show .big, .g-table .big { width: 48px; }
.g-table .group-body { gap: 3px; }
.g-table .big.mid { width: 60px; }
.big.narrow { width: 40px; }
.big .caret { margin-top: 1px; }
.small-grid { display: grid; grid-auto-rows: 24px; gap: 12px 9px; padding: 3px 7px 0; }
.c2 { grid-template-columns: repeat(2, 24px); }
.c3 { grid-template-columns: repeat(3, 24px); }
.c6 { grid-template-columns: repeat(6, 24px); padding: 3px 4px 0; }
.small-grid svg { display: block; width: 24px; height: 24px; }
.o { fill: none; stroke: #e8760a; stroke-width: 1.3px; }
.b { fill: none; stroke: #00a8cc; stroke-width: 1.3px; }
.more { margin: 14px 0 0 5px; }
.group-label { display: flex; align-items: center; gap: 3px; padding: 0 8px 0 0; font-size: 11px; line-height: 12px; color: #00648c; }
.group-label span { flex: 1; text-align: center; }
.ribbon-end { position: absolute; right: 6px; bottom: 8px; }

/* border bar */
.border-bar { display: flex; align-items: center; gap: 9px; height: 28px; padding: 0 6px 0 12px; border-bottom: 1px solid #aaa; font-size: 11px; }
.menu-button { display: flex; align-items: center; white-space: nowrap; }
.menu-button svg { margin-right: 6px; }
.menu-button .caret { margin-left: 6px; }
.bar-sep { width: 1px; height: 20px; background: #d6d6d6; }
.bar-icon { width: 16px; height: 16px; fill: none; }
.type-filter { width: 149px; margin-left: 2px; }
.scope-filter { width: 156px; }
.border-bar .select-wrap { height: 22px; }
.bar-end { margin-left: auto; }
.select-wrap { position: relative; display: flex; align-items: center; border: 1px solid #777; background: #fff; }
.select-wrap::after { content: ""; position: absolute; right: 5px; top: 50%; width: 8px; height: 4px; margin-top: -2px; background: #111; clip-path: polygon(0 0, 100% 0, 50% 100%); }
select { appearance: none; flex: 1; min-width: 0; height: 100%; padding: 0 2px; border: 0; outline: 0; background: none; }

/* workspace */
.workspace { flex: 1; display: flex; min-height: 0; }
.rail { width: 37px; display: flex; flex-direction: column; border-right: 1px solid #aaa; background: #dcdcdc; }
.rail button { display: flex; align-items: center; justify-content: center; height: 44px; padding-left: 4px; }
.rail svg { width: 24px; height: 24px; fill: none; stroke: #444; }
.rail .gear { height: 32px; padding: 0; }
.rail .gear svg { width: 16px; height: 16px; }
.rail .current { margin: 0 -1px 0 3px; padding: 0; border: 1px solid #aaa; border-right: 0; background: #fff; }
.navigator { width: 323px; padding: 0 9px 7px 8px; display: flex; flex-direction: column; border-right: 1px solid #aaa; }
.panel-title { display: flex; align-items: center; gap: 4px; height: 26px; padding: 0 2px 0 0; margin-left: -2px; color: #000; }
.panel-title span { flex: 1; }
.max-button { width: 12px; height: 11px; border: 1px solid #000; border-top-width: 2px; }
.tree { flex: 1; display: flex; flex-direction: column; position: relative; border: 1px solid #d2d2d2; }
.tree table { width: 100%; table-layout: fixed; border-collapse: separate; border-spacing: 0; }
col.flag { width: 24px; }
col.remark { width: 55px; }
th { height: 22px; padding: 0 6px; font-weight: 400; text-align: left; background: #f0f0f0; border-right: 1px solid #d2d2d2; border-bottom: 1px solid #c8c8c8; }
td { height: 20px; padding: 0; border-right: 1px solid #e6e6e6; border-bottom: 1px solid #e6e6e6; text-align: center; line-height: 0; }
th:last-child, td:last-child { border-right: 0; }
tbody tr:nth-child(even) { background: #fafafa; }
.sort-up { display: inline-block; width: 10px; height: 5px; margin-left: 17px; vertical-align: 2px; background: #111; clip-path: polygon(50% 0, 100% 100%, 0 100%); }
.node { display: flex; align-items: center; height: 19px; line-height: 19px; overflow: hidden; white-space: nowrap; }
.node .ic { margin-right: 3px; }
.node .ic + .ic { margin-left: -3px; }
.d1 { padding-left: 5px; }
.d2 { padding-left: 24px; }
.d3 { padding-left: 57px; }
.d2b { padding-left: 38px; }
.strong { font-weight: 700; }
.ic { flex: none; width: 16px; height: 16px; }
.twist { flex: none; width: 9px; height: 9px; margin-right: 5px; border: 1px solid #ccc; background: #fff; font: 11px/7px "Liberation Mono", monospace; color: #000; text-align: center; }
.tree-lines { position: absolute; left: -2px; top: 22px; pointer-events: none; }
.empty-rows { flex: 1; display: grid; grid-template-columns: 1fr 24px 24px 55px; background: repeating-linear-gradient(#fafafa 0 19px, #e6e6e6 19px 20px, #fff 20px 39px, #e6e6e6 39px 40px); }
.empty-rows i { border-right: 1px solid #e6e6e6; }
.empty-rows i:last-child { border-right: 0; }
.h-scroll { height: 17px; padding: 8px 52px 0 17px; background: #f0f0f0; }
.h-scroll i { display: block; height: 2px; background: #888; }
.splitter { height: 6px; margin: 2px 0 1px; border: 1px solid #aaa; background: #dcdcdc; }
.fold { display: flex; align-items: center; gap: 10px; height: 24px; padding: 4px 0 0 10px; border-bottom: 2px solid #d0d0d0; font-size: 14px; line-height: 18px; color: #00648c; }
.fold::before { content: ""; width: 4px; height: 8px; background: #00648c; clip-path: polygon(0 0, 100% 50%, 0 100%); }

/* stage */
.stage { flex: 1; min-width: 0; display: flex; flex-direction: column; position: relative; }
.doc-tabs { height: 27px; border-bottom: 2px solid #005f87; }
.doc-tab { display: inline-flex; align-items: center; gap: 6px; height: 25px; padding: 0 7px; color: #fff; background: #005f87; }
.doc-tab button { display: flex; }
.canvas { flex: 1; position: relative; overflow: hidden; margin-bottom: 1px; border: 1px solid #808080; border-right: 0; background: #fff; }
.drawing { position: absolute; left: 0; top: 0; }
.drawing text { font-family: "Noto Sans CJK SC", sans-serif; }
.faint text { font-size: 11px; fill: #ffffa8; }
.block-text text { font-size: 9px; fill: #8a5a30; text-anchor: middle; }
.block-text .company { font-size: 11px; }
.drawing .sheet-name { font-family: "Liberation Sans", sans-serif; font-size: 13px; fill: #f0984c; }
.float-bar { position: absolute; left: 742px; top: 0; display: flex; align-items: center; gap: 8px; width: 74px; height: 38px; padding: 3px 0 0 13px; background: #fff; border-bottom: 1px solid #d6d6d6; }
.float-sep { width: 1px; height: 26px; background: #d6d6d6; }
.float-bar .low { margin: 14px 0 0 -4px; }

/* dialog */
.dialog { position: absolute; left: 0; top: 105px; width: 322px; border: 1px solid #d0d0d0; border-top: 0; background: #f0f0f0; }
.dialog-title { display: flex; align-items: center; gap: 10px; height: 24px; margin: 0 -1px; padding: 0 9px 0 7px; font-size: 14px; color: #fff; background: #005f87; }
.dialog-title span { flex: 1; margin-left: -2px; }
.dialog-title button { display: flex; }
.dialog-body { display: flex; flex-direction: column; gap: 2px; padding: 5px 5px 10px; }
.box { display: block; margin: 0; padding: 0 8px 8px; min-width: 0; border: 1px solid #c8c8c8; background: #fff; }
.box.closed { padding-bottom: 0; }
h3 { display: flex; align-items: center; gap: 7px; height: 24px; margin: 0; padding-bottom: 3px; font-size: 13px; line-height: 20px; font-weight: 700; color: #00648c; }
h3::before { content: ""; width: 8px; height: 4px; background: #00648c; clip-path: polygon(0 0, 100% 0, 50% 100%); }
h3.shut::before { width: 4px; height: 8px; margin: 0 2px; clip-path: polygon(0 0, 100% 50%, 0 100%); }
h3.indent { margin: 2px 0 0 9px; }
.closed h3 { height: 23px; padding-bottom: 1px; }
.inner h3 { gap: 9px; }
.pick { display: flex; gap: 2px; margin: 6px 0 4px; }
.pick-label { flex: 1; display: flex; align-items: center; gap: 4px; height: 32px; background: #ffe078; }
.square { display: flex; align-items: center; justify-content: center; flex: none; width: 32px; height: 32px; border: 1px solid #777; background: #fff; }
.square.hot { border-color: #f8c030; background: #ffe078; }
.square.little { width: 24px; height: 24px; }
.box.inner { padding: 0 8px; }
.box.inner:not(.closed) { padding-bottom: 8px; }
.box.inner.closed { margin-top: 4px; }
.field { display: flex; align-items: center; gap: 4px; height: 25px; margin-top: 6px; }
.field label { flex: 1; }
.field .select-wrap { width: 138px; height: 25px; }
.field .select-wrap select { padding: 0 4px; }
.field .with-icon { padding-left: 4px; }
.inner .field { height: 27px; }
.field.tall { height: 32px; margin-top: 2px; }
.field.tall.set { margin-top: 6px; }
.field.short { height: 24px; margin-top: 2px; }
.combo input { width: 115px; height: 19px; margin-left: 2px; padding: 0 2px; border: 0; outline: 1px dotted #111; outline-offset: -1px; background: #d8eaf0; }
.number { width: 82px; height: 23px; padding: 0 6px; border: 1px solid #777; font-family: "Liberation Serif", "Noto Sans CJK SC", serif; font-size: 17px; text-align: right; }
.collapse { align-self: center; width: 10px; height: 5px; margin: 3px 0; background: #111; clip-path: polygon(50% 0, 100% 100%, 0 100%); }
.dialog-actions { display: flex; justify-content: flex-end; padding: 8px 10px 0; border-top: 1px solid #c8c8c8; }
.primary { width: 54px; height: 25px; color: #fff; background: #005f87; }

/* footer and overlays */
.status { height: 23px; padding: 1px 3px; border-top: 1px solid #aaa; border-bottom: 1px solid #b0bcc4; font-size: 11px; line-height: 18px; font-weight: 500; color: #000; }
.desktop-edge { height: 2px; background: #d6e8f0; }
.ime { position: absolute; left: 1040px; bottom: 4px; display: flex; align-items: center; gap: 8px; width: 223px; height: 25px; border: 1px solid #a8c4e4; background: #fff; }
.ime svg { flex: none; fill: #0070dc; }
.ime-logo { margin: -4px -2px 0 -4px; }
.ime b { font-size: 14px; color: #0070dc; }
.watermark { position: absolute; right: 3px; bottom: 10px; font: 36px/44px "Liberation Sans", "Noto Sans CJK SC", sans-serif; color: rgba(225, 225, 225, .75); text-shadow: 1px 1px 1px #888; white-space: nowrap; pointer-events: none; }
```
